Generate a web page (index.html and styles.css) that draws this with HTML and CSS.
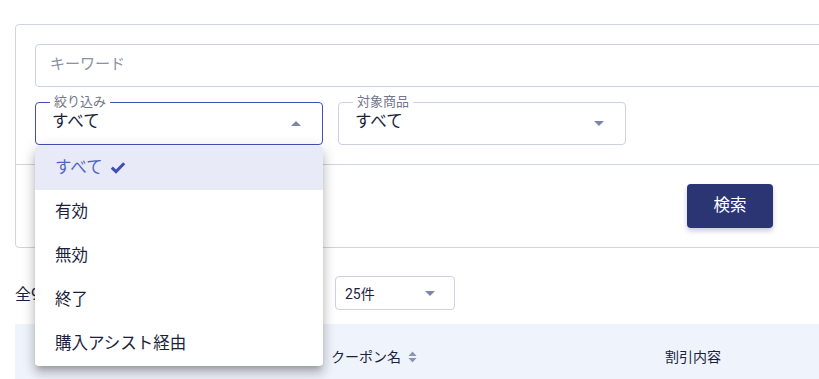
FILE: index.html
```html
<!DOCTYPE html>
<html lang="ja">

<head>
    <meta charset="UTF-8">
    <meta name="viewport" content="width=device-width, initial-scale=1.0">
    <title>クーポン一覧</title>
    <link rel="stylesheet" href="styles.css">
</head>

<body>
    <div class="page">
        <div class="search-card">
            <div class="filters">
                <div class="keyword">キーワード</div>
                <div class="select-row">
                    <div class="select select-open">
                        <span class="select-label">絞り込み</span>
                        <span class="select-value">すべて</span>
                        <span class="arrow arrow-up"></span>

                        <ul class="menu">
                            <li class="menu-item selected">すべて
                                <svg class="check" width="16" height="13" viewBox="0 0 16 13">
                                    <polyline points="1.8,6.6 6,10.6 14.2,2.2" fill="none" stroke="currentColor" stroke-width="3" />
                                </svg>
                            </li>
                            <li class="menu-item">有効</li>
                            <li class="menu-item">無効</li>
                            <li class="menu-item">終了</li>
                            <li class="menu-item">購入アシスト経由</li>
                        </ul>
                    </div>

                    <div class="select">
                        <span class="select-label">対象商品</span>
                        <span class="select-value">すべて</span>
                        <span class="arrow"></span>
                    </div>
                </div>
            </div>
            <div class="actions">
                <button class="search-btn">検索</button>
            </div>
        </div>

        <div class="summary">
            <span class="total">全9件</span>
            <div class="per-page">
                <span>25件</span>
                <span class="arrow"></span>
            </div>
        </div>

        <div class="table-head">
            <div class="th"></div>
            <div class="th">クーポン名
                <svg class="sort" width="9" height="12" viewBox="0 0 9 12">
                    <polygon points="4.5,0.5 8.5,5 0.5,5" />
                    <polygon points="0.5,7 8.5,7 4.5,11.5" />
                </svg>
            </div>
            <div class="th">割引内容</div>
        </div>
    </div>
</body>

</html>
```

FILE: styles.css
```css
html,
body {
    overflow: hidden;
}

body {
    margin: 0;
    padding: 24px 0 0 15px;
    font-family: Roboto, "Noto Sans CJK JP", sans-serif;
    color: #1b1f3b;
    background: white;
}

.page {
    width: 860px;
}

.search-card {
    border: 1px solid #cfd4e4;
    border-radius: 4px;
}

.filters {
    padding: 19px;
    border-bottom: 1px solid #cfd4e4;
}

.keyword {
    box-sizing: border-box;
    height: 43px;
    padding: 0 0 2px 14px;
    border: 1px solid #cdd2e2;
    border-radius: 4px;
    font-size: 15px;
    line-height: 39px;
    color: #8b90a4;
}

.select-row {
    display: flex;
    gap: 15px;
    margin-top: 15px;
}

.select {
    position: relative;
    box-sizing: border-box;
    display: flex;
    align-items: center;
    width: 288px;
    height: 43px;
    padding: 0 21px 0 16px;
    border: 1px solid #cdd2e2;
    border-radius: 4px;
}

.select-open {
    border-color: #3f51b5;
}

.select-label {
    position: absolute;
    top: -9px;
    left: 14px;
    padding: 0 4px;
    background: white;
    font-size: 13px;
    line-height: 16px;
    color: #72778c;
}

.select-value {
    flex: 1;
    font-size: 16.5px;
    line-height: 20px;
    margin-top: -3px;
}

.arrow {
    width: 0;
    height: 0;
    border-left: 5px solid transparent;
    border-right: 5px solid transparent;
    border-top: 5px solid #7e85ad;
}

.arrow-up {
    border-top: 0;
    border-bottom: 5px solid #7e85ad;
}

/* 開いているドロップダウン */
.menu {
    position: absolute;
    top: 43px;
    left: -1px;
    z-index: 10;
    width: 288px;
    margin: 0;
    padding: 0;
    list-style: none;
    background: white;
    border-radius: 4px;
    box-shadow: 0 5px 5px -3px rgba(0, 0, 0, 0.2), 0 8px 10px 1px rgba(0, 0, 0, 0.14), 0 3px 14px 2px rgba(0, 0, 0, 0.12);
    overflow: hidden;
}

.menu-item {
    box-sizing: border-box;
    display: flex;
    align-items: center;
    height: 44px;
    padding: 0 0 4px 20px;
    font-size: 16.5px;
    color: #1b1f3b;
}

.menu-item.selected {
    background: #e8ebf7;
    color: #5564c2;
}

.check {
    margin: 2px 0 0 7px;
    color: #3f4fb8;
}

.actions {
    padding: 19px;
}

.search-btn {
    width: 86px;
    height: 44px;
    margin-left: 652px;
    padding: 0 0 4px;
    border: 0;
    border-radius: 4px;
    background: #2b3574;
    color: white;
    font-family: inherit;
    font-size: 16.5px;
    box-shadow: 0 3px 5px rgba(43, 53, 116, 0.25);
}

.summary {
    display: flex;
    align-items: center;
    margin-top: 28px;
}

.total {
    width: 320px;
    font-size: 16px;
    white-space: nowrap;
    overflow: hidden;
}

.per-page {
    box-sizing: border-box;
    display: flex;
    align-items: center;
    justify-content: space-between;
    width: 120px;
    height: 34px;
    padding: 0 19px 0 9px;
    border: 1px solid #cdd2e2;
    border-radius: 4px;
    font-size: 14px;
}

.table-head {
    display: grid;
    grid-template-columns: 300px 334px 1fr;
    height: 66px;
    margin-top: 14px;
    background: #eff3fb;
}

.th {
    display: flex;
    align-items: center;
    padding: 0 0 2px 16px;
    font-size: 14px;
}

.sort {
    margin: 2px 0 0 7px;
    fill: #8d93b6;
}
```
